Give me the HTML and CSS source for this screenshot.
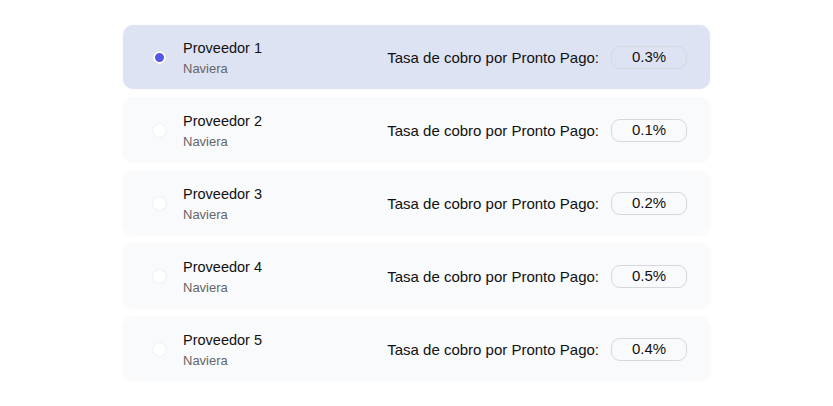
FILE: index.html
```html
<!DOCTYPE html>
<html lang="es">
<head>
    <meta charset="UTF-8">
    <meta name="viewport" content="width=device-width, initial-scale=1.0">
    <title>Proveedores</title>
    <link rel="stylesheet" href="styles.css">
</head>
<body>
    <div class="list">
        <label class="provider selected">
            <span class="radio"></span>
            <div class="provider-info">
                <div class="provider-name">Proveedor 1</div>
                <div class="provider-type">Naviera</div>
            </div>
            <div class="rate-label">Tasa de cobro por Pronto Pago:</div>
            <div class="rate-box">0.3%</div>
        </label>
        <label class="provider">
            <span class="radio"></span>
            <div class="provider-info">
                <div class="provider-name">Proveedor 2</div>
                <div class="provider-type">Naviera</div>
            </div>
            <div class="rate-label">Tasa de cobro por Pronto Pago:</div>
            <div class="rate-box">0.1%</div>
        </label>
        <label class="provider">
            <span class="radio"></span>
            <div class="provider-info">
                <div class="provider-name">Proveedor 3</div>
                <div class="provider-type">Naviera</div>
            </div>
            <div class="rate-label">Tasa de cobro por Pronto Pago:</div>
            <div class="rate-box">0.2%</div>
        </label>
        <label class="provider">
            <span class="radio"></span>
            <div class="provider-info">
                <div class="provider-name">Proveedor 4</div>
                <div class="provider-type">Naviera</div>
            </div>
            <div class="rate-label">Tasa de cobro por Pronto Pago:</div>
            <div class="rate-box">0.5%</div>
        </label>
        <label class="provider">
            <span class="radio"></span>
            <div class="provider-info">
                <div class="provider-name">Proveedor 5</div>
                <div class="provider-type">Naviera</div>
            </div>
            <div class="rate-label">Tasa de cobro por Pronto Pago:</div>
            <div class="rate-box">0.4%</div>
        </label>
    </div>
</body>
</html>
```

FILE: styles.css
```css
body {
    font-family: 'Liberation Sans', Arial, sans-serif;
    margin: 0;
    padding: 0;
    background-color: #fff;
    color: #111;
}

.list {
    width: 587px;
    margin: 25px auto 0;
    display: flex;
    flex-direction: column;
    gap: 9px;
}

.provider {
    display: flex;
    align-items: center;
    height: 64px;
    padding: 0 23px 0 30px;
    box-sizing: border-box;
    background-color: #f9fafb;
    border-radius: 10px;
    box-shadow: 0 0 3px rgba(0, 0, 0, 0.05);
}

.provider.selected {
    background-color: #dee3f4;
}

.radio {
    width: 13px;
    height: 13px;
    border-radius: 50%;
    background-color: #fff;
    box-shadow: 0 0 2px rgba(0, 0, 0, 0.12);
    box-sizing: border-box;
    margin-right: 17px;
    flex-shrink: 0;
}

.selected .radio {
    background-color: #5557e4;
    border: 2.5px solid #fff;
    box-shadow: 0 0 1px rgba(0, 0, 0, 0.15);
}

.provider-info {
    flex: 1;
    margin-top: 2px;
}

.provider-name {
    font-size: 14.5px;
    line-height: 17px;
}

.provider-type {
    font-size: 13px;
    line-height: 17px;
    color: #666;
    margin-top: 3px;
}

.rate-label {
    font-size: 15px;
    margin-right: 12px;
}

.rate-box {
    width: 76px;
    height: 23px;
    box-sizing: border-box;
    border: 1.5px solid #d6d8de;
    border-radius: 9px;
    font-size: 15px;
    line-height: 20px;
    text-align: center;
}
```
